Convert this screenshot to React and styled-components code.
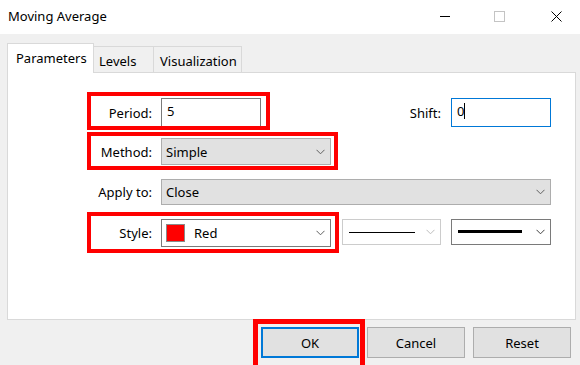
import React from 'react';
import styled, { createGlobalStyle, css } from 'styled-components';

const Global = createGlobalStyle`
  html, body { margin: 0; padding: 0; background: #f0f0f0; }
  body { font-family: "Noto Sans", "Segoe UI", sans-serif; font-size: 13px; color: #000; }
  * { box-sizing: border-box; }
`;

const Window = styled.div`
  width: 580px;
  height: 365px;
  overflow: hidden;
  display: flex;
  flex-direction: column;
  background: #f0f0f0;
`;

const TitleBar = styled.div`
  height: 34px;
  flex-shrink: 0;
  background: #fff;
  display: flex;
  align-items: center;
  padding: 0 18px 0 8px;
`;

const Title = styled.div`
  flex: 1;
  font-size: 13px;
  margin-top: -3px;
`;

const WinIcon = styled.svg`
  display: block;
  margin-left: ${p => p.$ml || 0}px;
  margin-top: -2px;
`;

const Body = styled.div`
  flex: 1;
  display: flex;
  flex-direction: column;
  padding: 9px 4px 0 7px;
`;

const TabRow = styled.div`
  height: 30px;
  display: flex;
  align-items: flex-end;
`;

const Tab = styled.div`
  display: flex;
  align-items: center;
  justify-content: flex-start;
  border: 1px solid #d9d9d9;
  border-bottom: none;
  width: ${p => p.$w}px;
  padding-left: ${p => p.$pl}px;
  margin-left: ${p => (p.$first ? 0 : -1)}px;
  white-space: nowrap;
  ${p => p.$active
    ? css`
        height: 30px;
        background: #fff;
        position: relative;
        z-index: 1;
        padding-bottom: 1px;
      `
    : css`
        height: 27px;
        background: #f0f0f0;
        padding-top: 2px;
      `}
`;

const Panel = styled.div`
  margin-top: -1px;
  height: 248px;
  background: #fff;
  border: 1px solid #d9d9d9;
  padding: 25px 24px 0 0;
  display: flex;
  flex-direction: column;
`;

const Row = styled.div`
  display: flex;
  align-items: center;
  margin-top: ${p => p.$mt || 0}px;
`;

const Highlight = styled.div`
  position: relative;
  display: flex;
  align-items: center;
  &::after {
    content: "";
    position: absolute;
    top: ${p => p.$t}px;
    left: ${p => p.$l}px;
    right: ${p => p.$r}px;
    bottom: ${p => p.$b}px;
    border: ${p => p.$bw || 4}px solid #ff0000;
    pointer-events: none;
  }
`;

const Label = styled.div`
  flex-shrink: 0;
  width: ${p => (p.$w ? `${p.$w}px` : 'auto')};
  text-align: right;
  margin-right: ${p => p.$mr ?? 9}px;
  white-space: nowrap;
`;

const Spacer = styled.div`
  flex: 1;
`;

const TextBox = styled.div`
  width: 100px;
  height: 29px;
  background: #fff;
  border: 1px solid ${p => (p.$focused ? '#0078d7' : '#7a7a7a')};
  padding: 3px 0 0 5px;
  display: flex;
  align-items: flex-start;
  line-height: 18px;
`;

const Caret = styled.span`
  display: inline-block;
  width: 1px;
  height: 16px;
  background: #000;
  margin-top: 1px;
`;

const Select = styled.div`
  flex: ${p => (p.$grow ? 1 : '0 0 auto')};
  width: ${p => (p.$w ? `${p.$w}px` : 'auto')};
  height: ${p => p.$h || 27}px;
  background: ${p => (p.$white ? '#fff' : '#e1e1e1')};
  border: 1px solid ${p => (p.$white ? '#7a7a7a' : '#adadad')};
  display: flex;
  align-items: center;
  padding: 0 5px 0 4px;
`;

const SelectText = styled.div`
  flex: 1;
  display: flex;
  align-items: center;
  white-space: nowrap;
`;

const Swatch = styled.span`
  display: inline-block;
  width: 19px;
  height: 18px;
  background: #ff0000;
  border: 1px solid #8a8a8a;
  margin-right: 9px;
`;

const LineCombo = styled.div`
  width: ${p => p.$w}px;
  height: 26px;
  margin-left: ${p => p.$ml}px;
  align-self: flex-start;
  background: #fff;
  border: 1px solid ${p => (p.$disabled ? '#cccccc' : '#7a7a7a')};
  display: flex;
  align-items: center;
  padding: 0 5px 0 6px;
`;

const Stroke = styled.div`
  width: ${p => p.$w}px;
  height: ${p => p.$h}px;
  background: #000;
  margin-right: auto;
  margin-top: ${p => p.$mt || 0}px;
`;

const ButtonRow = styled.div`
  display: flex;
  justify-content: flex-end;
  gap: 8px;
  padding: 7px 5px 0 0;
`;

const Button = styled.div`
  width: 98px;
  height: 31px;
  display: flex;
  align-items: center;
  justify-content: center;
  background: #e1e1e1;
  border: ${p => (p.$default ? '2px solid #0078d7' : '1px solid #adadad')};
`;

const Chevron = ({ color = '#606060' }) => (
  <svg width="9" height="6" viewBox="0 0 9 6" style={{ display: 'block', flexShrink: 0 }}>
    <polyline points="0.5,0.8 4.5,4.8 8.5,0.8" fill="none" stroke={color} strokeWidth="1" />
  </svg>
);

export default function App() {
  return (
    <Window>
      <Global />
      <TitleBar>
        <Title>Moving Average</Title>
        <WinIcon width="11" height="11" viewBox="0 0 11 11">
          <line x1="0" y1="5.5" x2="10" y2="5.5" stroke="#000" strokeWidth="1" />
        </WinIcon>
        <WinIcon $ml={43} width="11" height="11" viewBox="0 0 11 11">
          <rect x="0.5" y="0.5" width="10" height="10" fill="none" stroke="#c4c4c4" strokeWidth="1" />
        </WinIcon>
        <WinIcon $ml={46} width="11" height="11" viewBox="0 0 11 11">
          <path d="M0.5 0.5 L10.5 10.5 M10.5 0.5 L0.5 10.5" stroke="#000" strokeWidth="1" fill="none" />
        </WinIcon>
      </TitleBar>
      <Body>
        <TabRow>
          <Tab $active $first $w={87} $pl={8}>Parameters</Tab>
          <Tab $w={61} $pl={5}>Levels</Tab>
          <Tab $w={89} $pl={6}>Visualization</Tab>
        </TabRow>
        <Panel>
          <Row>
            <Highlight $t={-6} $l={79} $r={-9} $b={-3}>
              <Label $w={144}>Period:</Label>
              <TextBox>5</TextBox>
            </Highlight>
            <Spacer />
            <Label $mr={10}>Shift:</Label>
            <TextBox $focused>0<Caret /></TextBox>
          </Row>
          <Row $mt={11}>
            <Highlight $t={-6} $l={79} $r={-7} $b={-5}>
              <Label $w={144}>Method:</Label>
              <Select $w={170} $h={27}>
                <SelectText>Simple</SelectText>
                <Chevron />
              </Select>
            </Highlight>
          </Row>
          <Row $mt={14}>
            <Label $w={144}>Apply to:</Label>
            <Select $grow $h={26}>
              <SelectText>Close</SelectText>
              <Chevron />
            </Select>
          </Row>
          <Row $mt={14}>
            <Highlight $t={-7} $l={79} $r={-8} $b={-6}>
              <Label $w={144}>Style:</Label>
              <Select $w={170} $h={28} $white>
                <SelectText><Swatch />Red</SelectText>
                <Chevron />
              </Select>
            </Highlight>
            <LineCombo $w={99} $ml={11} $disabled>
              <Stroke $w={66} $h={1} />
              <Chevron color="#bdbdbd" />
            </LineCombo>
            <LineCombo $w={100} $ml={10}>
              <Stroke $w={64} $h={3} $mt={-1} />
              <Chevron color="#404040" />
            </LineCombo>
          </Row>
        </Panel>
        <ButtonRow>
          <Highlight $t={-8} $l={-8} $r={-6} $b={-14} $bw={5}>
            <Button $default>OK</Button>
          </Highlight>
          <Button>Cancel</Button>
          <Button>Reset</Button>
        </ButtonRow>
      </Body>
    </Window>
  );
}
